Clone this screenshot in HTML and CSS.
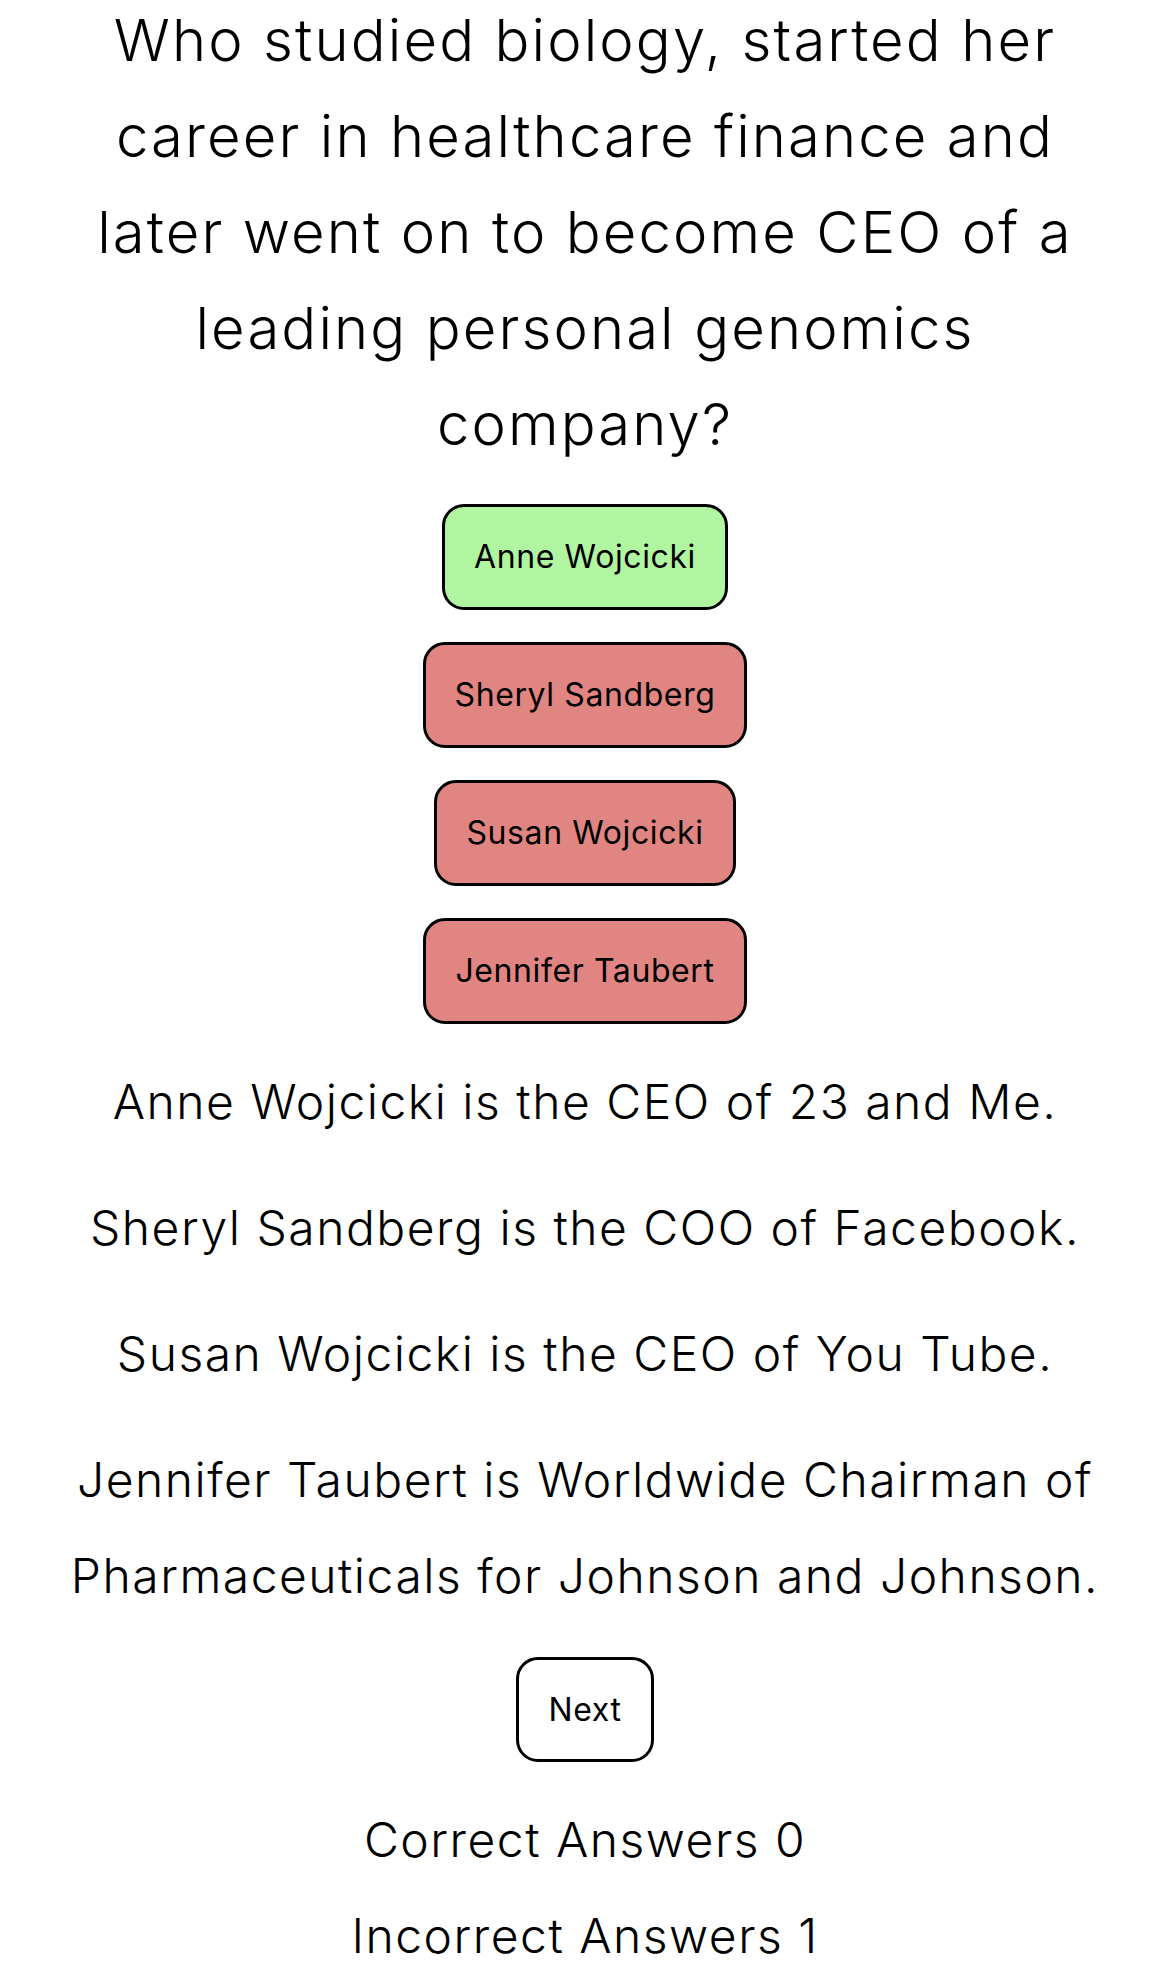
FILE: index.html
```html
<!DOCTYPE html>
<html lang="en">
<head>
<meta charset="utf-8">
<title>Quiz</title>
<link rel="stylesheet" href="styles.css">
</head>
<body>
<main class="quiz">
  <h1 class="question">Who studied biology, started her career in healthcare finance and later went on to become CEO of a leading personal genomics company?</h1>
  <div class="answers">
    <button class="answer correct">Anne Wojcicki</button>
    <button class="answer wrong">Sheryl Sandberg</button>
    <button class="answer wrong">Susan Wojcicki</button>
    <button class="answer wrong">Jennifer Taubert</button>
  </div>
  <div class="explanations">
    <p class="explanation">Anne Wojcicki is the CEO of 23 and Me.</p>
    <p class="explanation">Sheryl Sandberg is the COO of Facebook.</p>
    <p class="explanation">Susan Wojcicki is the CEO of You Tube.</p>
    <p class="explanation">Jennifer Taubert is Worldwide Chairman of Pharmaceuticals for Johnson and Johnson.</p>
  </div>
  <button class="next">Next</button>
  <div class="score">
    <p class="score-line">Correct Answers 0</p>
    <p class="score-line">Incorrect Answers 1</p>
  </div>
</main>
</body>
</html>
```
FILE: styles.css
```css
html, body {
  margin: 0;
  padding: 0;
  background: #ffffff;
  color: #000000;
}

body {
  font-family: "Inter", "Noto Sans", sans-serif;
  overflow: hidden;
}

.quiz {
  display: flex;
  flex-direction: column;
  align-items: center;
  padding: 0 35px;
  text-align: center;
}

.question {
  max-width: 1040px;
  margin: -8px 0 0;
  font-size: 58px;
  font-weight: 300;
  line-height: 96px;
  letter-spacing: 2.1px;
}

.answers {
  margin-top: 32px;
  display: flex;
  flex-direction: column;
  align-items: center;
  gap: 32px;
}

.answer,
.next {
  font-family: "Inter", "Noto Sans", sans-serif;
  font-size: 32px;
  font-weight: 400;
  line-height: 40px;
  letter-spacing: 0.6px;
  color: #000000;
  border: 3px solid #000000;
  border-radius: 22px;
  padding: 30px 29px;
  margin: 0;
  cursor: pointer;
}

.correct {
  background: #b0f5a0;
}

.wrong {
  background: #e08582;
}

.explanations {
  margin-top: 30px;
  display: flex;
  flex-direction: column;
  gap: 30px;
}

.explanation {
  margin: 0;
  font-size: 48px;
  font-weight: 300;
  line-height: 96px;
  letter-spacing: 1.5px;
}

.next {
  margin-top: 33px;
  background: #ffffff;
  height: 105px;
  padding-top: 0;
  padding-bottom: 0;
}

.score {
  margin-top: 30px;
}

.score-line {
  margin: 0;
  font-size: 48px;
  font-weight: 300;
  line-height: 96px;
  letter-spacing: 1.5px;
}
```
